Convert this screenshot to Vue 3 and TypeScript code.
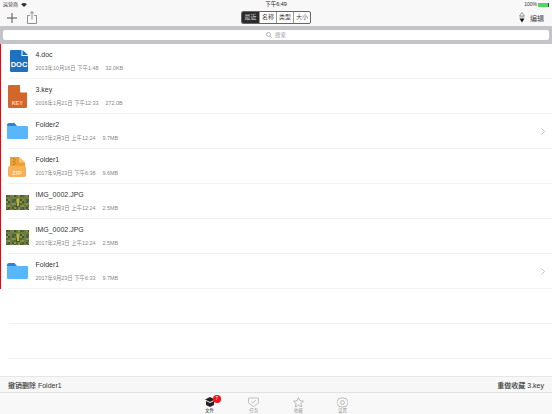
<script setup lang="ts">
type FileKind = "doc" | "key" | "folder" | "zip" | "photo";

interface Item {
  name: string;
  meta: string;
  size: string;
  kind: FileKind;
  chevron?: boolean;
}

const items: Item[] = [
  { name: "4.doc", meta: "2013年10月16日 下午1:48", size: "32.0KB", kind: "doc" },
  { name: "3.key", meta: "2016年1月21日 下午12:33", size: "272.0B", kind: "key" },
  { name: "Folder2", meta: "2017年2月3日 上午12:24", size: "9.7MB", kind: "folder", chevron: true },
  { name: "Folder1", meta: "2017年9月23日 下午6:38", size: "9.6MB", kind: "zip" },
  { name: "IMG_0002.JPG", meta: "2017年2月3日 上午12:24", size: "2.5MB", kind: "photo" },
  { name: "IMG_0002.JPG", meta: "2017年2月3日 上午12:24", size: "2.5MB", kind: "photo" },
  { name: "Folder1", meta: "2017年9月23日 下午6:33", size: "9.7MB", kind: "folder", chevron: true },
];

const sorts = ["最近", "名称", "类型", "大小"];

// foliage for the photo thumbnail: a small mottled grid
const greens = ["#4d5c34", "#62743c", "#7a8a48", "#566838", "#8a9650", "#465530", "#6c7e40"];
const leaves: { x: number; y: number; fill: string }[] = [];
for (let y = 0; y < 15; y += 2) {
  for (let x = 0; x < 23; x += 2) {
    leaves.push({ x, y, fill: greens[(x * 5 + y * 3 + (x * y) % 7) % greens.length] });
  }
}
</script>

<template>
  <div class="page">
    <div class="status">
      <span class="carrier">运营商
        <svg class="wifi" viewBox="0 0 10 7" width="6" height="4"><path d="M0 2.200a7 7 0 0 1 10 0L5 7z" fill="#333" /></svg>
      </span>
      <span class="clock">下午6:49</span>
      <span class="battery">100%
        <i class="cell"></i>
      </span>
    </div>

    <header class="toolbar">
      <div class="tools">
        <svg width="10" height="10" viewBox="0 0 10 10"><path d="M5 0v10M0 5h10" stroke="#555" stroke-width="1" /></svg>
        <svg width="10" height="13" viewBox="0 0 10 13" fill="none" stroke="#777" stroke-width=".8">
          <path d="M3 4.500H.5v8h9v-8H7M5 8.500V.6M3 2.400 5 .6l2 1.800" />
        </svg>
      </div>
      <div class="segments">
        <span v-for="(s, i) in sorts" :key="s" class="segment" :class="{ on: i === 0 }">{{ s }}</span>
      </div>
      <div class="edit">
        <svg width="6" height="11" viewBox="0 0 6 11">
          <path d="M3 .5 5.500 4H.5z" fill="none" stroke="#777" stroke-width=".7" />
          <path d="M.5 5h5" stroke="#777" stroke-width=".6" />
          <path d="M.5 6.500h5L3 10.500z" fill="#111" />
        </svg>
        <span>编辑</span>
      </div>
    </header>

    <div class="search">
      <div class="search-box">
        <svg width="6" height="6" viewBox="0 0 6 6" fill="none" stroke="#999" stroke-width=".7"><circle cx="2.500" cy="2.500" r="2" /><path d="m4 4 1.800 1.800" /></svg>
        <span>搜索</span>
      </div>
    </div>

    <main class="list">
      <div class="rows">
        <div v-for="(item, i) in items" :key="i" class="row">
          <div class="icon">
            <svg v-if="item.kind === 'doc'" class="doc-icon" width="18" height="22" viewBox="0 0 18 22">
              <path d="M1 0h10.500v6H18v15a1 1 0 0 1-1 1H1a1 1 0 0 1-1-1V1a1 1 0 0 1 1-1z" fill="#1d72bf" />
              <path d="M12.500 0 18 5h-5.500z" fill="#1d72bf" />
              <text x="9" y="17" class="badge-text doc">DOC</text>
            </svg>
            <svg v-else-if="item.kind === 'key'" width="19" height="23" viewBox="0 0 19 23">
              <path d="M1 0h11v6.500a1 1 0 0 0 1 1h6V22a1 1 0 0 1-1 1H1a1 1 0 0 1-1-1V1a1 1 0 0 1 1-1z" fill="#d2672a" />
              <text x="9.300" y="19.500" class="badge-text key">KEY</text>
            </svg>
            <svg v-else-if="item.kind === 'folder'" class="folder-icon" width="21" height="16" viewBox="0 0 21 16">
              <path d="M0 2a2 2 0 0 1 2-2h5.500l2.500 3h-10z" fill="#2a84d2" />
              <path d="M0 4a1 1 0 0 1 1-1h19a1 1 0 0 1 1 1v11a1 1 0 0 1-1 1H1a1 1 0 0 1-1-1z" fill="#57b7fa" />
            </svg>
            <svg v-else-if="item.kind === 'zip'" class="zip-icon" width="18" height="20" viewBox="0 0 18 20">
              <path d="M2 0h9l6 5.500V10H2z" fill="#f0a030" />
              <path d="M11 0l6 5.500h-6z" fill="#f7c56d" />
              <path d="M5 1h1.500v1H5zM6.500 2.500H8v1H6.500zM5 4h1.500v1H5zM6.500 5.500H8v1H6.500zM5 7h1.500v1H5z" fill="#a87a30" />
              <rect x="0" y="9" width="18" height="11" rx="2" fill="#f4b158" />
              <text x="9" y="17.500" class="badge-text zip">ZIP</text>
            </svg>
            <svg v-else class="photo" width="23" height="15" viewBox="0 0 23 15">
              <rect width="23" height="15" fill="#5e7136" />
              <rect v-for="(l, n) in leaves" :key="n" :x="l.x" :y="l.y" width="2" height="2" :fill="l.fill" />
              <path d="M11 3.500h2.500L13 11h-2z" fill="#c6b23a" />
            </svg>
          </div>
          <div class="info">
            <div class="name">{{ item.name }}</div>
            <div class="meta"><span>{{ item.meta }}</span><span>{{ item.size }}</span></div>
          </div>
          <svg v-if="item.chevron" class="chevron" width="4" height="7" viewBox="0 0 4 7" fill="none" stroke="#b5b5b5" stroke-width=".8"><path d="m.5.5 3 3-3 3" /></svg>
        </div>
      </div>
      <div class="row blank"></div>
      <div class="row blank"></div>
    </main>

    <div class="undo">
      <span>撤销删除 Folder1</span>
      <span>重做收藏 3.key</span>
    </div>

    <nav class="tabs">
      <div class="tab active">
        <div class="tab-icon">
          <svg width="10" height="10" viewBox="0 0 10 10">
            <path d="M5 0 10 2.500 5 5 0 2.500z" fill="#222" />
            <path d="M1 4v4l4 2 4-2V4L5 6z" fill="#222" />
          </svg>
          <b class="badge">7</b>
        </div>
        <span>文件</span>
      </div>
      <div class="tab">
        <div class="tab-icon">
          <svg width="11" height="10" viewBox="0 0 11 10" fill="none" stroke="#aaa" stroke-width=".7">
            <path d="M.5 1h10v5L5.500 9.500.5 6zM3.500 4.500 5 6l3-3" />
          </svg>
        </div>
        <span>任务</span>
      </div>
      <div class="tab">
        <div class="tab-icon">
          <svg width="11" height="10" viewBox="0 0 22 20" fill="none" stroke="#999" stroke-width="1.300">
            <path d="m11 1 3 6.500 7 .8-5.200 4.700 1.400 6.800L11 16.400 4.800 19.800 6.200 13 1 8.300l7-.8z" />
          </svg>
        </div>
        <span>收藏</span>
      </div>
      <div class="tab">
        <div class="tab-icon">
          <svg width="11" height="11" viewBox="0 0 20 20" fill="none" stroke="#999" stroke-width="1.200">
            <path d="M10 1l3 1.600 3.400-.2 1.700 3L20 8v4l-1.900 2.600-1.700 3-3.400-.2L10 19l-3-1.600-3.400.2-1.700-3L0 12V8l1.900-2.600 1.700-3 3.400.2z" />
            <circle cx="10" cy="10" r="3.500" />
          </svg>
        </div>
        <span>设置</span>
      </div>
    </nav>
  </div>
</template>

<style scoped>
.page,
.page * {
  box-sizing: border-box;
}

.page {
  width: 552px;
  height: 414px;
  display: flex;
  flex-direction: column;
  overflow: hidden;
  background: #fff;
  color: #333;
  font-family: "Liberation Sans", "Noto Sans CJK SC", sans-serif;
}

.status {
  height: 9px;
  flex-shrink: 0;
  background: #f8f8f8;
  padding: 0 3px;
  display: grid;
  grid-template-columns: 1fr auto 1fr;
  align-items: center;
  font-size: 5px;
  line-height: 9px;
}

.carrier {
  display: flex;
  align-items: center;
  gap: 3px;
}

.clock {
  font-size: 5.500px;
  color: #222;
}

.battery {
  justify-self: end;
  display: flex;
  align-items: center;
  gap: 1px;
}

.cell {
  width: 11px;
  height: 4px;
  background: #4cd964;
  border-right: 1px solid #444;
}

.toolbar {
  height: 17px;
  flex-shrink: 0;
  background: #f8f8f8;
  display: grid;
  grid-template-columns: 1fr auto 1fr;
  align-items: center;
  padding: 0 8px 0 7px;
}

.tools {
  display: flex;
  align-items: center;
  gap: 10px;
}

.segments {
  display: flex;
  border: 0.5px solid #666;
  border-radius: 2px;
  overflow: hidden;
  background: #fff;
  margin-left: 1px;
}

.segment {
  width: 17px;
  height: 11px;
  line-height: 11px;
  text-align: center;
  font-size: 6px;
  color: #444;
  border-left: 0.5px solid #999;
}

.segment:first-child {
  border-left: 0;
}

.segment.on {
  background: #2b2b2b;
  color: #ddd;
}

.edit {
  justify-self: end;
  display: flex;
  align-items: center;
  gap: 5px;
  font-size: 7px;
  color: #444;
}

.search {
  height: 18px;
  flex-shrink: 0;
  background: #c3c3c8;
  padding: 4px 3px;
}

.search-box {
  height: 10px;
  background: #fff;
  border-radius: 2px;
  display: flex;
  align-items: center;
  justify-content: center;
  gap: 3px;
  font-size: 5.500px;
  color: #999;
}

.list {
  flex: 1;
  min-height: 0;
}

.rows {
  border-left: 1.500px solid #f5000f;
}

.row {
  height: 35px;
  display: flex;
  align-items: center;
  position: relative;
  padding-left: 4px;
}

.row::after {
  content: "";
  position: absolute;
  left: 7px;
  right: 0;
  bottom: 0;
  height: 1px;
  background: #f1f1f2;
}

.blank {
  margin-left: 1.500px;
}

.icon {
  width: 25px;
  display: flex;
  justify-content: center;
  flex-shrink: 0;
}

.doc-icon {
  margin-left: 3px;
  margin-top: -1px;
}

.folder-icon {
  margin-top: -2px;
}

.zip-icon {
  margin-left: -1px;
}

.photo {
  filter: blur(0.5px);
  margin-top: 1px;
}

.info {
  flex: 1;
  margin-left: 5.500px;
}

.name {
  font-size: 7px;
  line-height: 9px;
  color: #333;
  margin-top: -1px;
}

.meta {
  display: flex;
  gap: 7px;
  font-size: 5.400px;
  line-height: 7px;
  color: #888;
  margin-top: 6px;
}

.chevron {
  margin-right: 7px;
}

.badge-text {
  font-family: "Liberation Sans", sans-serif;
  font-weight: 700;
  text-anchor: middle;
  fill: #fff;
}

.doc {
  font-size: 7.500px;
}

.key {
  font-size: 5.500px;
  fill: #f5d4bb;
}

.zip {
  font-size: 6px;
  fill: #fbe7c6;
}

.undo {
  height: 17px;
  flex-shrink: 0;
  background: #f7f7f7;
  border-top: 1px solid #e6e6e6;
  border-bottom: 1px solid #e2e2e2;
  display: flex;
  align-items: center;
  justify-content: space-between;
  padding: 0 8px;
  font-size: 7px;
  font-weight: 500;
  color: #333;
}

.tabs {
  height: 21px;
  flex-shrink: 0;
  background: #f8f8f8;
  display: flex;
  justify-content: center;
  gap: 19px;
}

.tab {
  width: 25.300px;
  display: flex;
  flex-direction: column;
  align-items: center;
  padding-top: 4px;
  font-size: 4.500px;
  line-height: 6px;
  color: #999;
}

.tab.active {
  color: #222;
}

.tab-icon {
  position: relative;
  height: 11px;
}

.badge {
  position: absolute;
  left: 8.500px;
  top: -2px;
  width: 7.500px;
  height: 7.500px;
  border-radius: 50%;
  background: #f4121f;
  color: #fff;
  font-size: 4.500px;
  font-weight: 400;
  line-height: 7.500px;
  text-align: center;
}
</style>

<style>
html,
body {
  margin: 0;
  background: #fff;
}
</style>
